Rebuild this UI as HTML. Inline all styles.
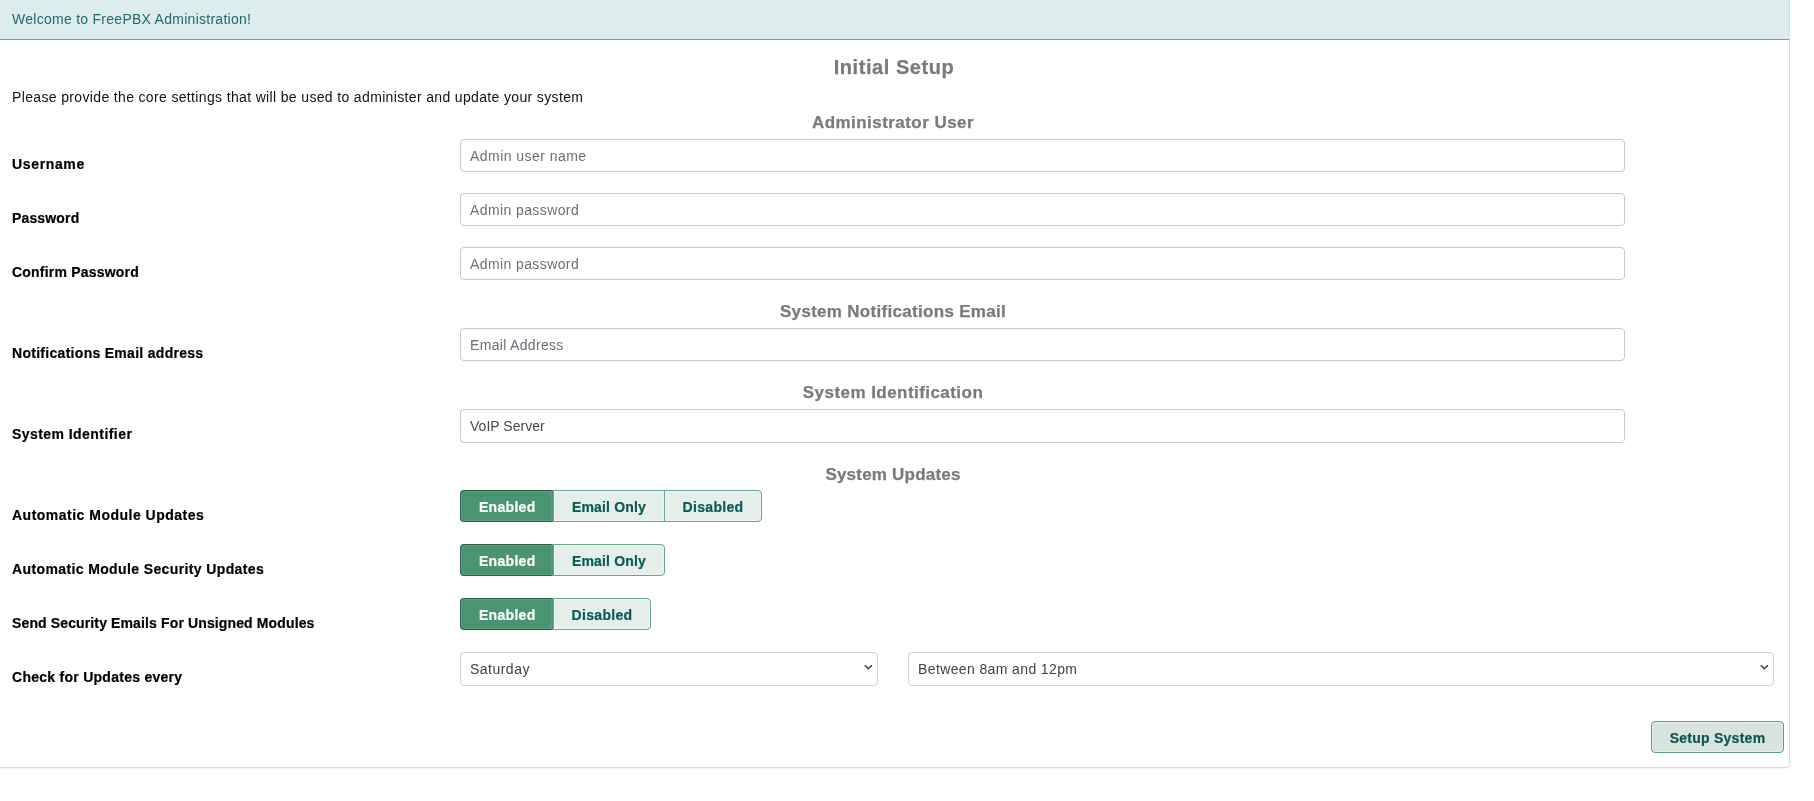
<!DOCTYPE html>
<html><head><meta charset="utf-8">
<style>
html,body{margin:0;padding:0;background:#fff;width:1814px;height:801px;overflow:hidden;}
body{font-family:"Liberation Sans",sans-serif;font-size:14px;color:#111;position:relative;-webkit-font-smoothing:antialiased;}
#wrap{position:absolute;left:0;top:0;width:1814px;height:801px;will-change:transform;}
#panel{position:absolute;left:0;top:0;width:1789px;height:767px;border-right:1px solid #dcdcdc;border-bottom:1px solid #dcdcdc;border-bottom-right-radius:4px;background:#fff;box-shadow:0 1px 1px rgba(0,0,0,0.05);}
#hdr{position:absolute;left:0;top:0;width:1789px;height:39px;background:#ddecec;border-bottom:1px solid #6aa888;}
.t{position:absolute;white-space:nowrap;line-height:16px;height:16px;}
.lbl{font-weight:700;color:#000;left:12px;-webkit-text-stroke:0.2px #000;}
.h{font-weight:700;color:#7a7a7a;-webkit-text-stroke:0.25px #7a7a7a;font-size:17px;left:0;width:1786px;text-align:center;line-height:20px;height:20px;}
.inp{position:absolute;left:460px;width:1163px;height:31px;border:1px solid #c8c8c8;border-radius:4px;background:#fff;}
.inp span{position:absolute;left:9px;top:8px;line-height:16px;}
.ph{color:#67717a;}
.val{color:#4a4a4a;}
.bg{position:absolute;left:460px;height:32px;}
.b{position:absolute;top:0;height:30px;border:1px solid #6aa585;background:#e4eeeb;color:#0a5a55;font-weight:700;-webkit-text-stroke:0.2px currentColor;text-align:center;line-height:32px;box-sizing:content-box;box-shadow:inset 0 0 0 1px rgba(255,255,255,0.4);}
.b.on{box-shadow:inset 0 0 0 1px rgba(120,200,160,0.25);background:#4b9471;border-color:#2e5e4a;border-right-color:#4b9471;color:#fff;letter-spacing:0.3px;text-indent:1.5px;}
.sel{position:absolute;top:652px;height:32px;border:1px solid #ced4da;border-radius:4px;background:#fff;}
.sel span{position:absolute;left:9px;top:8px;line-height:16px;color:#3d4349;}
.sel svg{position:absolute;top:11px;}
</style></head><body>
<div id="wrap">
<div id="panel"></div>
<div id="hdr"></div>
<div class="t" style="left:12px;top:11px;color:#1d6b6b;letter-spacing:0.27px;">Welcome to FreePBX Administration!</div>

<div class="t h" style="top:55px;left:1px;font-size:20px;line-height:24px;height:24px;letter-spacing:0.55px;">Initial Setup</div>
<div class="t" style="left:12px;top:89px;color:#111;letter-spacing:0.35px;">Please provide the core settings that will be used to administer and update your system</div>

<div class="t h" style="top:113px;letter-spacing:0.45px;">Administrator User</div>
<div class="t lbl" style="top:156px;letter-spacing:0.65px;">Username</div>
<div class="inp" style="top:139px;"><span class="ph" style="letter-spacing:0.46px">Admin user name</span></div>
<div class="t lbl" style="top:210px;letter-spacing:0.15px;">Password</div>
<div class="inp" style="top:193px;"><span class="ph" style="letter-spacing:0.4px">Admin password</span></div>
<div class="t lbl" style="top:264px;letter-spacing:0.2px;">Confirm Password</div>
<div class="inp" style="top:247px;"><span class="ph" style="letter-spacing:0.4px">Admin password</span></div>

<div class="t h" style="top:302px;letter-spacing:0.3px;">System Notifications Email</div>
<div class="t lbl" style="top:345px;letter-spacing:0.29px;">Notifications Email address</div>
<div class="inp" style="top:328px;"><span class="ph" style="letter-spacing:0.32px">Email Address</span></div>

<div class="t h" style="top:383px;letter-spacing:0.45px;">System Identification</div>
<div class="t lbl" style="top:426px;letter-spacing:0.44px;">System Identifier</div>
<div class="inp" style="top:409px;height:32px;"><span class="val" style="letter-spacing:0.03px">VoIP Server</span></div>

<div class="t h" style="top:465px;letter-spacing:0.21px;">System Updates</div>
<div class="t lbl" style="top:507px;letter-spacing:0.49px;">Automatic Module Updates</div>
<div class="bg" style="top:490px;">
  <div class="b on" style="left:0;width:91px;border-radius:4px 0 0 4px;">Enabled</div>
  <div class="b" style="left:93px;width:110px;letter-spacing:0.18px;">Email Only</div>
  <div class="b" style="left:204px;width:96px;border-radius:0 4px 4px 0;letter-spacing:0.3px;">Disabled</div>
</div>
<div class="t lbl" style="top:561px;letter-spacing:0.38px;">Automatic Module Security Updates</div>
<div class="bg" style="top:544px;">
  <div class="b on" style="left:0;width:91px;border-radius:4px 0 0 4px;">Enabled</div>
  <div class="b" style="left:93px;width:110px;border-radius:0 4px 4px 0;letter-spacing:0.18px;">Email Only</div>
</div>
<div class="t lbl" style="top:615px;letter-spacing:0.13px;">Send Security Emails For Unsigned Modules</div>
<div class="bg" style="top:598px;">
  <div class="b on" style="left:0;width:91px;border-radius:4px 0 0 4px;">Enabled</div>
  <div class="b" style="left:93px;width:96px;border-radius:0 4px 4px 0;letter-spacing:0.3px;">Disabled</div>
</div>
<div class="t lbl" style="top:669px;letter-spacing:0.27px;">Check for Updates every</div>
<div class="sel" style="left:460px;width:416px;"><span style="letter-spacing:0.48px">Saturday</span>
<svg style="left:403px" width="10" height="7" viewBox="0 0 10 7"><path d="M0.7 1.2 L4.3 4.7 L7.9 1.2" fill="none" stroke="#343a40" stroke-width="1.4"/></svg></div>
<div class="sel" style="left:908px;width:864px;"><span style="letter-spacing:0.38px">Between 8am and 12pm</span>
<svg style="left:851px" width="10" height="7" viewBox="0 0 10 7"><path d="M0.7 1.2 L4.3 4.7 L7.9 1.2" fill="none" stroke="#343a40" stroke-width="1.4"/></svg></div>

<div class="b" style="left:1651px;top:721px;width:131px;border-radius:4px;background:#d7e4de;border-color:#5a9e7c;color:#0b5454;letter-spacing:0.26px;">Setup System</div>
</div>
</body></html>
